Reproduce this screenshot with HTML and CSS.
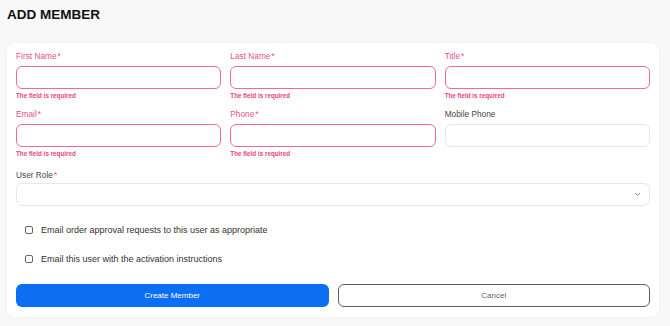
FILE: index.html
```html
<!DOCTYPE html>
<html lang="en">
<head>
  <meta charset="UTF-8">
  <meta name="viewport" content="width=device-width, initial-scale=1.0">
  <title>Add Member</title>
  <link rel="stylesheet" href="styles.css">
</head>
<body>
  <h1 class="page-title">ADD MEMBER</h1>
  <form class="member-card">
    <div class="field-grid">
      <div class="field invalid">
        <label>First Name<span class="req">*</span></label>
        <input type="text">
        <div class="error">The field is required</div>
      </div>
      <div class="field invalid">
        <label>Last Name<span class="req">*</span></label>
        <input type="text">
        <div class="error">The field is required</div>
      </div>
      <div class="field invalid">
        <label>Title<span class="req">*</span></label>
        <input type="text">
        <div class="error">The field is required</div>
      </div>
      <div class="field invalid">
        <label>Email<span class="req">*</span></label>
        <input type="text">
        <div class="error">The field is required</div>
      </div>
      <div class="field invalid">
        <label>Phone<span class="req">*</span></label>
        <input type="text">
        <div class="error">The field is required</div>
      </div>
      <div class="field">
        <label>Mobile Phone</label>
        <input type="text">
      </div>
    </div>

    <div class="field role-field">
      <label>User Role<span class="req">*</span></label>
      <div class="select-box">
        <svg class="chevron" width="7" height="5" viewBox="0 0 7 5"><path d="M1 1l2.5 2.5L6 1" fill="none" stroke="#888" stroke-width="1"/></svg>
      </div>
    </div>

    <label class="check-row"><span class="check-box"></span>Email order approval requests to this user as appropriate</label>
    <label class="check-row"><span class="check-box"></span>Email this user with the activation instructions</label>

    <div class="actions">
      <button type="button" class="btn-primary">Create Member</button>
      <button type="button" class="btn-cancel">Cancel</button>
    </div>
  </form>
</body>
</html>
```

FILE: styles.css
```css
* {
  box-sizing: border-box;
}
body {
  font-family: "Liberation Sans", Arial, sans-serif;
  background-color: #f8f8f8;
  margin: 0;
  padding: 7px 11px 9px 7px;
}
.page-title {
  margin: 0;
  font-size: 13.5px;
  line-height: 16px;
  font-weight: bold;
  color: #111;
}
.member-card {
  margin-top: 20px;
  background: #fff;
  border-radius: 8px;
  box-shadow: 0 0 3px rgba(0, 0, 0, 0.06);
  padding: 8px 9px 10px 9px;
}
.field-grid {
  display: grid;
  grid-template-columns: 1fr 1fr 1fr;
  column-gap: 9px;
  row-gap: 9px;
}
.field label {
  display: block;
  font-size: 8.3px;
  line-height: 10px;
  color: #444;
}
.field.invalid label {
  color: #e8508a;
}
.req {
  color: #e8508a;
  margin-left: 1px;
}
.field input {
  display: block;
  width: 100%;
  height: 23px;
  margin-top: 5px;
  border: 1px solid #e6e6e6;
  border-radius: 6px;
  background: #fff;
  outline: none;
}
.field.invalid input {
  border: 1.5px solid #f06a95;
}
.error {
  margin-top: 3px;
  font-size: 6.3px;
  line-height: 8px;
  font-weight: bold;
  color: #e8437f;
}
.role-field {
  margin-top: 12px;
}
.select-box {
  height: 23px;
  margin-top: 3px;
  border: 1px solid #e8e8e8;
  border-radius: 6px;
  display: flex;
  align-items: center;
  justify-content: flex-end;
  padding-right: 8px;
}
.check-row {
  display: flex;
  align-items: center;
  gap: 8px;
  font-size: 9px;
  line-height: 10px;
  color: #333;
  padding-left: 9px;
  margin-top: 19px;
}
.check-row + .check-row {
  margin-top: 19px;
}
.check-box {
  width: 8px;
  height: 8px;
  border: 1px solid #666;
  border-radius: 2px;
  flex-shrink: 0;
}
.actions {
  display: grid;
  grid-template-columns: 1fr 1fr;
  column-gap: 9px;
  margin-top: 20px;
}
.actions button {
  height: 23px;
  border-radius: 6px;
  font-family: inherit;
  font-size: 8px;
  cursor: pointer;
}
.btn-primary {
  background: #0b6ef3;
  color: #fff;
  border: none;
}
.btn-cancel {
  background: #fff;
  color: #666;
  border: 1.5px solid #5e5e5e;
}
```
